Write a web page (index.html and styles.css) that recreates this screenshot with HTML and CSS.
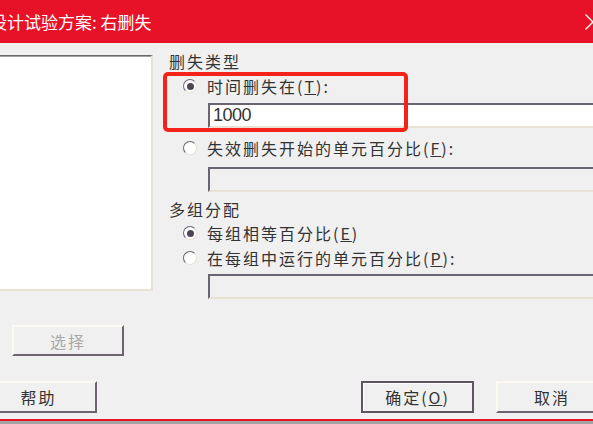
FILE: index.html
```html
<!DOCTYPE html>
<html lang="zh-CN">
<head>
<meta charset="utf-8">
<title>设计试验方案: 右删失</title>
<link rel="stylesheet" href="styles.css">
</head>
<body>
<div class="window">
  <div class="titlebar">
    <span class="title">设计试验方案: 右删失</span>
    <svg class="close" width="16" height="16" viewBox="0 0 16 16"><path d="M0.5 0.5 L15.5 15.5 M15.5 0.5 L0.5 15.5" stroke="#fff" stroke-width="1.3" fill="none"/></svg>
  </div>
  <div class="client">
    <div class="main">
      <div class="left">
        <div class="listbox"></div>
        <div class="btn btn-select disabled">选择</div>
      </div>
      <div class="right">
        <div class="group-label">删失类型</div>
        <div class="radio-row r1"><span class="radio checked"></span><span class="rtext">时间删失在(<u>T</u>):</span></div>
        <div class="textbox tb1">1000</div>
        <div class="radio-row r2"><span class="radio"></span><span class="rtext">失效删失开始的单元百分比(<u>F</u>):</span></div>
        <div class="textbox tb2 off"></div>
        <div class="group-label gl2">多组分配</div>
        <div class="radio-row r3"><span class="radio checked"></span><span class="rtext">每组相等百分比(<u>E</u>)</span></div>
        <div class="radio-row r4"><span class="radio"></span><span class="rtext">在每组中运行的单元百分比(<u>P</u>):</span></div>
        <div class="textbox tb3 off"></div>
      </div>
    </div>
    <div class="buttons">
      <div class="btn btn-help">帮助</div>
      <div class="btn btn-ok">确定(<u>O</u>)</div>
      <div class="btn btn-cancel">取消</div>
    </div>
    <div class="bottom-line"></div>
    <div class="taskbar"></div>
    <div class="highlight"></div>
  </div>
</div>
</body>
</html>
```
FILE: styles.css
```css
html, body {
  margin: 0;
  padding: 0;
  width: 593px;
  height: 424px;
  overflow: hidden;
  background: #f0f0f0;
}
.window {
  width: 593px;
  height: 424px;
  overflow: hidden;
  font-family: "Noto Sans CJK SC", "Liberation Sans", sans-serif;
  color: #333;
}
.titlebar {
  height: 43px;
  background: #e81228;
  display: flex;
  align-items: center;
  justify-content: space-between;
}
.title {
  color: #fff;
  font-size: 17px;
  line-height: 1;
  margin-left: -10px;
  white-space: nowrap;
}
.close {
  margin-right: -8px;
}
.client {
  position: relative;
  height: 381px;
  background: #f0f0f0;
}
.main {
  display: flex;
  align-items: flex-start;
  height: 312px;
}
.left {
  margin-left: -20px;
  width: 173px;
  flex: none;
  padding-top: 12px;
}
.listbox {
  height: 233px;
  background: #fff;
  border-top: 1px solid #6a6a6a;
  border-left: 1px solid #6a6a6a;
  border-right: 2px solid #e6e2d4;
  border-bottom: 2px solid #e6e2d4;
  box-shadow: inset 0 1px 0 #a0a0a0;
}
.btn {
  box-sizing: border-box;
  height: 32px;
  display: flex;
  align-items: center;
  justify-content: center;
  font-size: 16px;
  letter-spacing: 2px;
  background: #f0f0f0;
  border-top: 2px solid #fbf9f2;
  border-left: 2px solid #fbf9f2;
  border-right: 2px solid #6d6470;
  border-bottom: 2px solid #6d6470;
  color: #333;
  flex: none;
}
.btn-select {
  margin-top: 34px;
  margin-left: 32px;
  width: 112px;
  height: 31px;
}
.disabled {
  color: #a8a8a8;
}
.right {
  flex: 1;
  margin-right: -40px;
  padding-top: 8px;
}
.group-label {
  height: 20px;
  line-height: 20px;
  font-size: 16px;
  letter-spacing: 2px;
  padding-left: 16px;
}
.gl2 {
  margin-top: 7px;
}
.radio-row {
  height: 20px;
  display: flex;
  align-items: center;
  padding-left: 30px;
}
.r1 { margin-top: 5px; }
.r2 { margin-top: 10px; }
.r3 { margin-top: 4px; }
.r4 { margin-top: 5px; }
.radio {
  box-sizing: border-box;
  width: 14px;
  height: 14px;
  border-radius: 50%;
  background: #fff;
  border: 1px solid #e6e2d4;
  border-top-color: #6a6470;
  border-left-color: #6a6470;
  flex: none;
  display: flex;
  align-items: center;
  justify-content: center;
}
.radio.checked::after {
  content: "";
  width: 7px;
  height: 7px;
  border-radius: 50%;
  background: #4e4452;
}
.rtext {
  margin-left: 10px;
  font-size: 16px;
  letter-spacing: 2px;
  line-height: 20px;
  white-space: nowrap;
}
.textbox {
  box-sizing: border-box;
  height: 25px;
  margin-left: 55px;
  border-top: 2px solid #6a6470;
  border-left: 2px solid #6a6470;
  border-bottom: 2px solid #e6e2d4;
  border-right: 2px solid #e6e2d4;
  background: #fff;
  font-family: "Liberation Sans", sans-serif;
  font-size: 18px;
  letter-spacing: -0.5px;
  line-height: 21px;
  padding-left: 3px;
  color: #333;
}
.tb1 { margin-top: 7px; }
.tb2 { margin-top: 9px; }
.tb3 { margin-top: 6px; }
.off { background: #f0f0f0; }
.buttons {
  display: flex;
  margin-left: -20px;
  margin-top: 26px;
}
.btn-help {
  width: 117px;
}
.btn-ok {
  width: 113px;
  margin-left: 264px;
  border: 2px solid #5e5560;
  box-shadow: inset 1px 1px 0 #fff;
}
.btn-cancel {
  width: 112px;
  margin-left: 22px;
}
.bottom-line {
  margin-top: 6px;
  height: 2px;
  background: #e81228;
}
.taskbar {
  height: 10px;
  background: #a4a4a4;
}
.highlight {
  position: absolute;
  left: 163px;
  top: 29px;
  width: 245px;
  height: 60px;
  box-sizing: border-box;
  border: 4px solid #f5221a;
  border-radius: 5px;
}
```
